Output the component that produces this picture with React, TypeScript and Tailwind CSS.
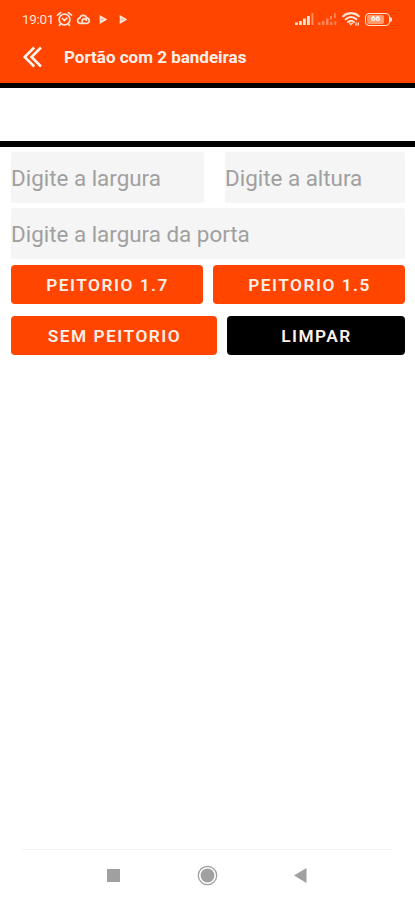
import type { ButtonHTMLAttributes, InputHTMLAttributes } from 'react';
import clsx from 'clsx';

function StatusBar() {
  return (
    <div className="flex h-[38px] items-center justify-between pr-[23px] pl-[22px] text-[#ffe3d6]">
      <div className="flex items-center">
        <span className="w-[34px] text-[13.5px] leading-4 tracking-[-0.3px]">19:01</span>
        <svg className="h-4 w-[17px]" viewBox="0 0 17 16" fill="none" stroke="currentColor" strokeWidth="1.7" strokeLinecap="round">
          <circle cx="8.5" cy="8.5" r="5.4" />
          <path d="M1.5 4.2 4.6 1.6M15.5 4.2 12.4 1.6M6.4 7.5l2 2 2.6-2.3M4.4 13.2l-1 1.2M12.6 13.2l1 1.2" />
        </svg>
        <svg className="ml-[3px] h-3 w-[15px]" viewBox="0 0 15 12" fill="none" stroke="currentColor" strokeWidth="1.7">
          <path d="M3.900 10.300a2.700 2.700 0 0 1-.2-5.300A3.600 3.600 0 0 1 10.600 4.800a2.800 2.800 0 0 1 .6 5.500ZM6.200 10.300V8.200a2.200 2.200 0 0 1 4.400-.2" />
        </svg>
        <svg className="ml-[8px] h-[9px] w-[9px]" viewBox="0 0 9 9" fill="#ffab85" stroke="currentColor" strokeWidth="1.600">
          <path d="M1.500 1.500v6l5.200-3Z" />
        </svg>
        <svg className="ml-[11px] h-[9px] w-[9px]" viewBox="0 0 9 9" fill="#ffab85" stroke="currentColor" strokeWidth="1.600">
          <path d="M1.500 1.500v6l5.200-3Z" />
        </svg>
      </div>
      <div className="flex items-center">
        <svg className="h-3 w-[19px]" viewBox="0 0 19 12" fill="currentColor">
          <path d="M0 9.500h2.800V12H0zM4 8h2.800v4H4zM8 5.500h2.800V12H8zM12 3h2.800v9H12z" />
          <path d="M16.500 0h1.800v12h-1.800z" opacity=".5" />
        </svg>
        <svg className="ml-[4px] h-3 w-[19px]" viewBox="0 0 19 12" fill="currentColor" opacity=".4">
          <path d="M0 9.500h2.500V12H0zM4 8h2.500v4H4zM8 5.500h2.500V12H8zM12 3h2v3.500h-2zM12 9h2.500v3H12zM16 0h1.800v5H16zM16.500 8h1.800v4h-1.800z" />
        </svg>
        <svg className="ml-[5px] h-[14px] w-[18px]" viewBox="0 0 18 14" fill="none" stroke="currentColor" strokeWidth="2.100" strokeLinecap="round">
          <path d="M1.200 4.200a11.500 11.500 0 0 1 15.600 0M3.700 7.200a7.500 7.500 0 0 1 10.600 0M6.200 10a3.800 3.800 0 0 1 5.600 0" />
          <path d="M7.300 11.500 9 13.200l1.700-1.700Z" fill="currentColor" strokeWidth=".8" />
          <path d="M14 11v2M16.300 11v2" strokeWidth="1.400" />
        </svg>
        <div className="ml-[5px] flex items-center">
          <div className="flex h-[13px] w-[25px] items-center rounded-[4px] border-[1.5px] border-current p-px">
            <div className="flex h-full w-[17px] items-center justify-center rounded-[2px] bg-[#ff9c70] text-[8px] leading-none font-bold text-white">66</div>
          </div>
          <div className="h-[5px] w-[2px] rounded-r bg-current" />
        </div>
      </div>
    </div>
  );
}

function Header({ title }: { title: string }) {
  return (
    <header className="h-[83px] bg-[#ff4500]">
      <StatusBar />
      <div className="flex h-[38px] items-center pl-[22px]">
        <button type="button" aria-label="Voltar">
          <svg className="h-6 w-[21px]" viewBox="0 0 21 24" fill="none" stroke="#fff3ec" strokeWidth="2.600">
            <path d="M12.200 2.500 2.700 12l9.500 9.500M19 2.500 9.500 12l9.500 9.500" />
          </svg>
        </button>
        <h1 className="ml-[21px] pt-px text-[17px] font-bold text-[#fff1e9]">{title}</h1>
      </div>
    </header>
  );
}

function Field({ className, ...props }: InputHTMLAttributes<HTMLInputElement>) {
  return (
    <input
      type="text"
      className={clsx('h-[51px] min-w-0 rounded-[2px] bg-[#f5f5f5] pt-px text-[22.4px] text-black outline-none placeholder:text-[#a0a0a0]', className)}
      {...props}
    />
  );
}

function Button({ className, ...props }: ButtonHTMLAttributes<HTMLButtonElement>) {
  return (
    <button
      type="button"
      className={clsx('h-[39px] rounded-[4px] pt-[2px] pl-px text-[17.3px] font-semibold tracking-[1.5px] text-[#fff0e8]', className)}
      {...props}
    />
  );
}

function NavigationBar() {
  return (
    <nav className="mx-[22px] mt-auto flex h-[51px] items-center border-t border-[#f4f4f4] pl-[85px]">
      <div className="h-[13px] w-[13px] bg-[#a0a0a0]" />
      <svg className="ml-[77px] h-[21px] w-[21px]" viewBox="0 0 21 21">
        <circle cx="10.500" cy="10.500" r="9.200" fill="none" stroke="#a0a0a0" strokeWidth="1.300" />
        <circle cx="10.500" cy="10.500" r="6.900" fill="#a0a0a0" />
      </svg>
      <svg className="ml-[76px] h-[15px] w-[13px]" viewBox="0 0 13 15" fill="#a0a0a0">
        <path d="M12.500 0v15L0 7.500Z" />
      </svg>
    </nav>
  );
}

export default function App() {
  return (
    <div className="flex h-[900px] w-full flex-col overflow-hidden bg-white font-['Roboto',sans-serif]">
      <Header title="Portão com 2 bandeiras" />
      <div className="h-[64px] border-t-[5px] border-b-[6px] border-black" />
      <main className="flex flex-col pt-[5px] pr-[10px] pl-[11px]">
        <div className="flex justify-between">
          <Field className="w-[193px]" placeholder="Digite a largura" />
          <Field className="w-[180px]" placeholder="Digite a altura" />
        </div>
        <Field className="mt-[5px]" placeholder="Digite a largura da porta" />
        <div className="mt-[6px] flex gap-[10px]">
          <Button className="flex-1 bg-[#ff4500]">PEITORIO 1.7</Button>
          <Button className="flex-1 bg-[#ff4500]">PEITORIO 1.5</Button>
        </div>
        <div className="mt-[12px] flex justify-between">
          <Button className="w-[206px] bg-[#ff4500]">SEM PEITORIO</Button>
          <Button className="w-[178px] bg-black">LIMPAR</Button>
        </div>
      </main>
      <NavigationBar />
    </div>
  );
}
